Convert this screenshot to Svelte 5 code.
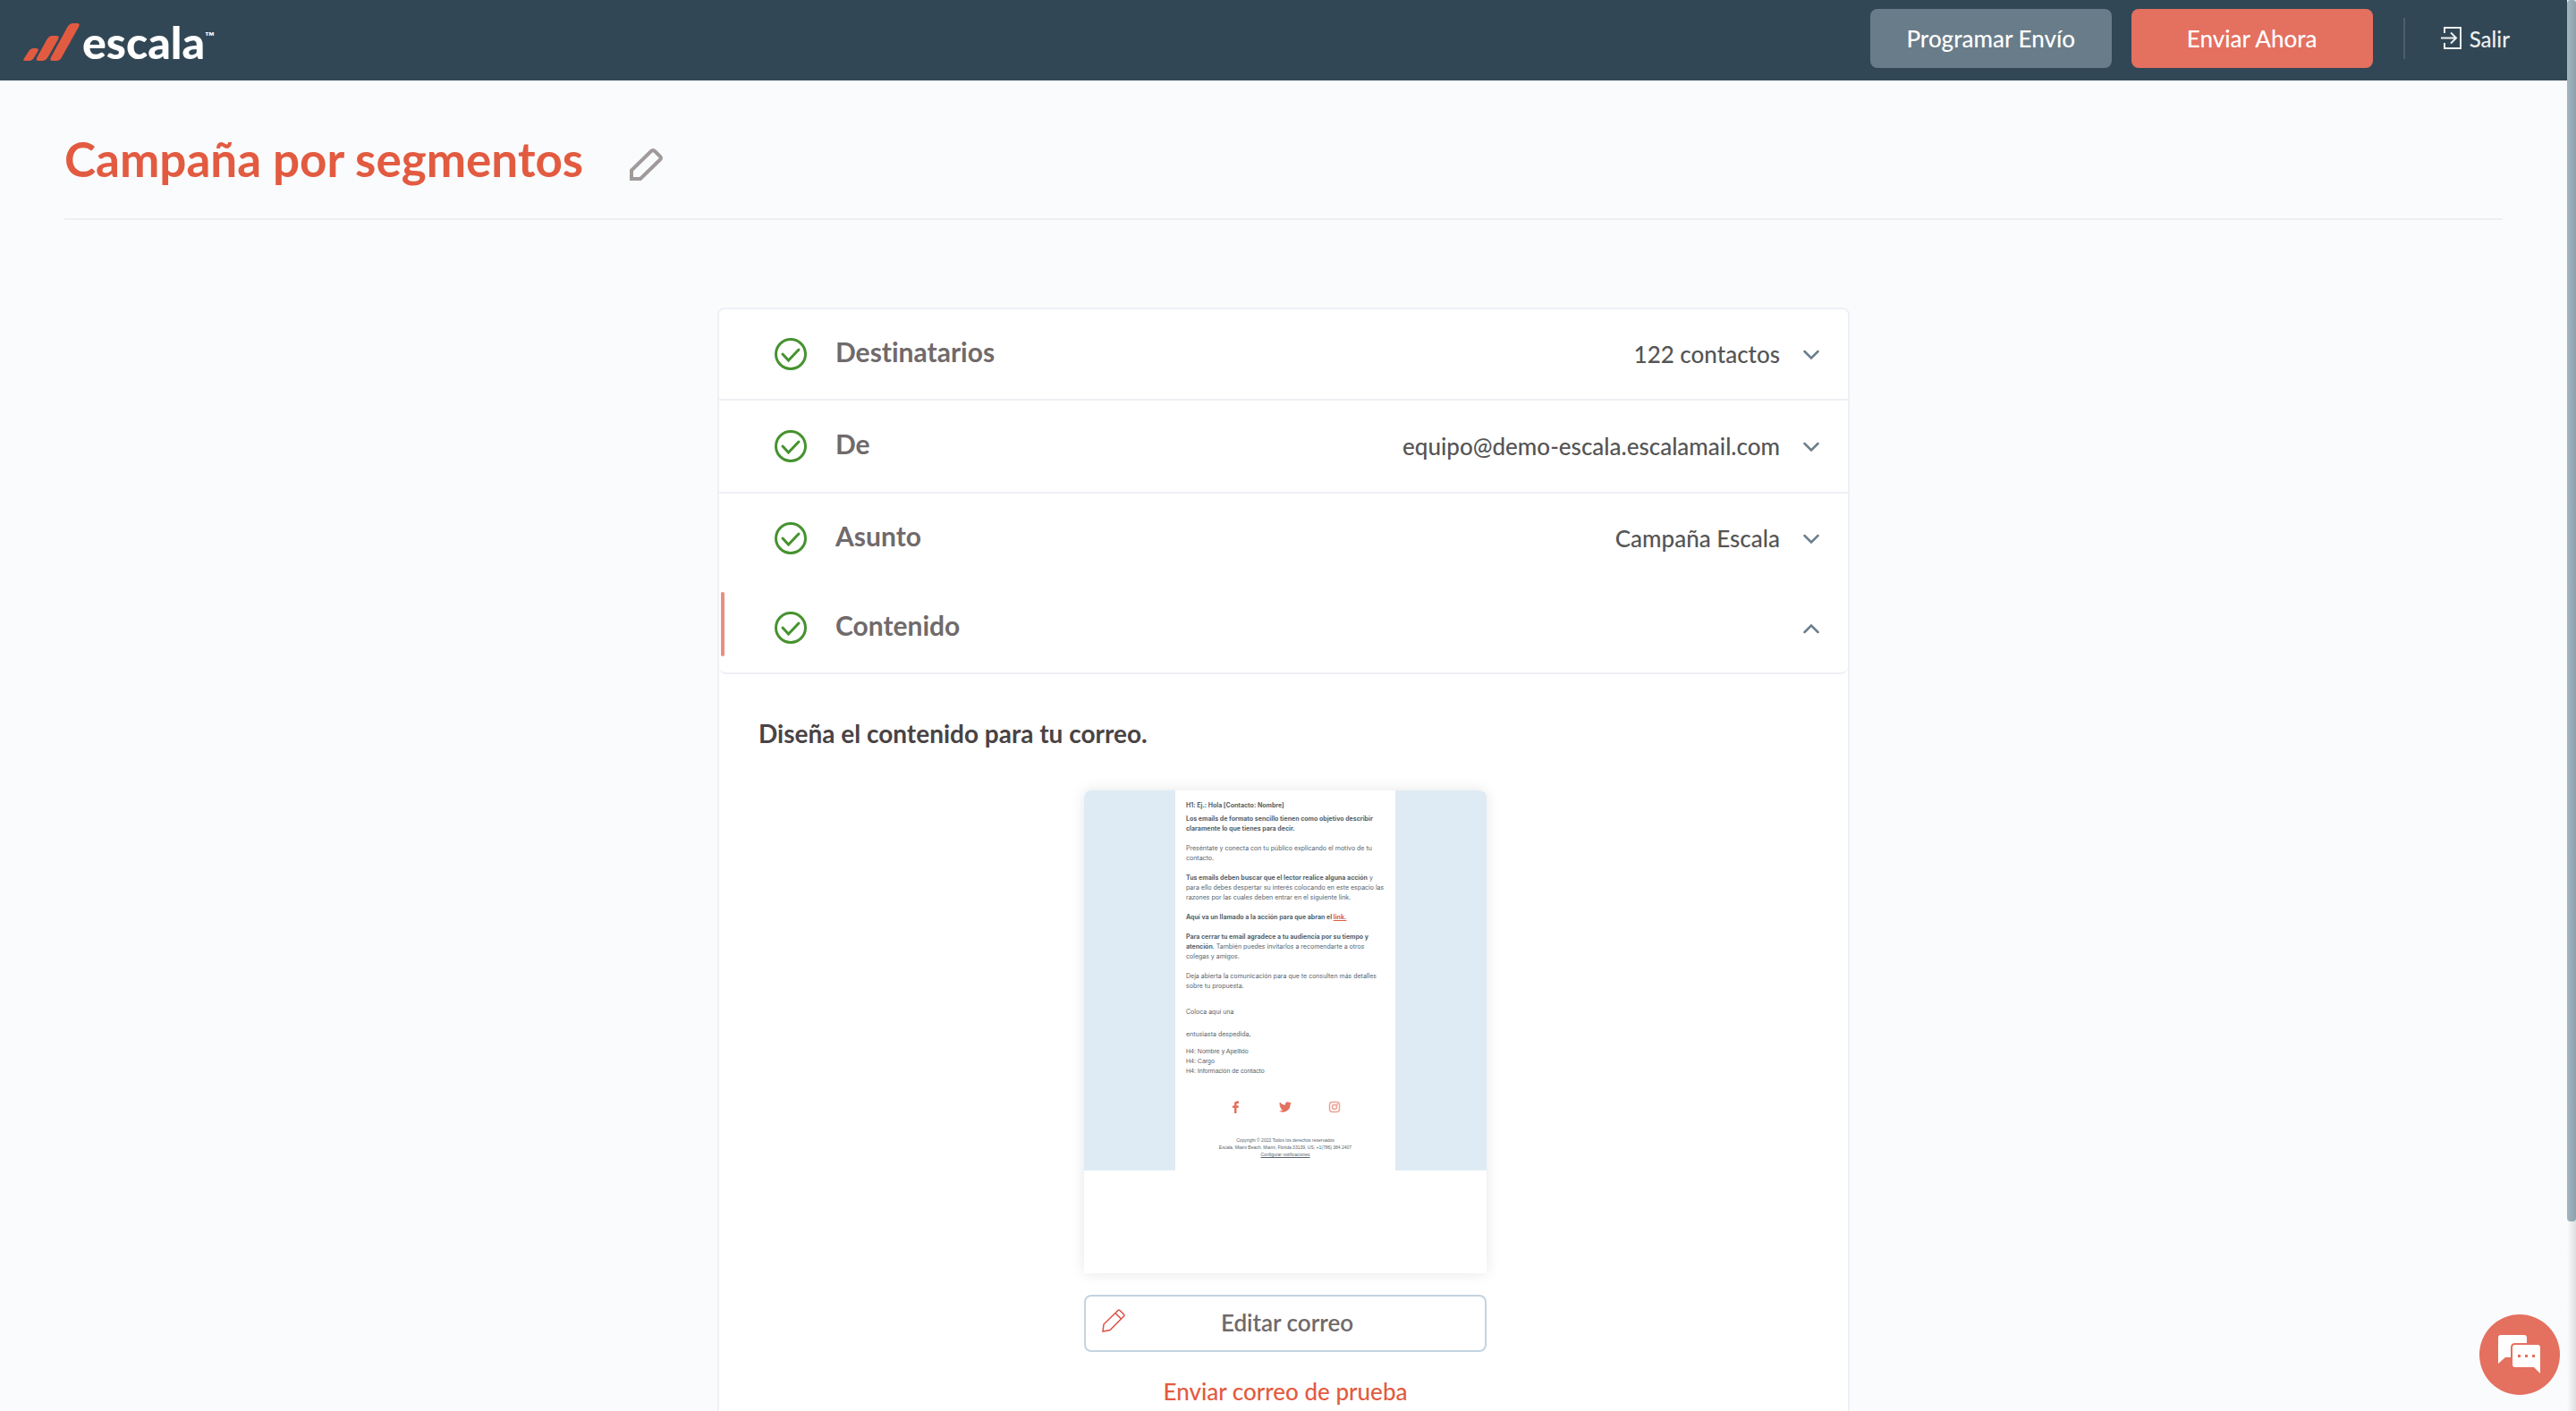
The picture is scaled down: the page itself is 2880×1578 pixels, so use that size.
<script lang="ts">
  type Step = { title: string; value: string; open?: boolean };

  let steps: Step[] = $state([
    { title: 'Destinatarios', value: '122 contactos' },
    { title: 'De', value: 'equipo@demo-escala.escalamail.com' },
    { title: 'Asunto', value: 'Campaña Escala' },
    { title: 'Contenido', value: '', open: true }
  ]);
</script>

<header class="topbar">
  <a class="logo" href="/" aria-label="escala">
    <svg width="64" height="44" viewBox="0 0 64 44" aria-hidden="true">
      <g fill="#e25b41">
        <path d="M6 31.500Q8 28 11.500 28H14.500Q18 28 16.200 31.500L12 38.500Q9.800 42 6.500 42H2Q-.8 42 .8 39.500Z" />
        <path d="M26.500 18Q28.800 14 32.500 14H37Q41 14 39 18L27.500 38Q25.200 42 21 42H17Q13.500 42 15.500 38Z" />
        <path d="M49.500 4Q52 0 56 0H60Q64 0 62 4L43 38Q40.800 42 37 42H32.500Q29 42 31 38Z" />
      </g>
    </svg>
    <span class="wordmark">escala</span><span class="tm">™</span>
  </a>
  <nav class="actions">
    <button class="btn schedule">Programar Envío</button>
    <button class="btn send">Enviar Ahora</button>
    <a class="exit" href="/salir">
      <svg width="24" height="26" viewBox="0 0 24 26" fill="none" stroke="currentColor" stroke-width="2" aria-hidden="true">
        <path d="M4 7V1H22V24H4V18M0 12.500H17M11 6.500L17 12.500L11 18.500" />
      </svg>
      Salir
    </a>
  </nav>
</header>

<main>
  <div class="heading">
    <h1>Campaña por segmentos</h1>
    <button class="rename" aria-label="Editar nombre">
      <svg width="38" height="38" viewBox="0 0 38 38" fill="none" stroke="#a09a9b" stroke-width="4" aria-hidden="true">
        <path d="M2 35V25.500L24 4Q26 2 28 4L34 10Q36 11.500 34 13.500L12 35Z" />
      </svg>
    </button>
  </div>

  <section class="panel">
    {#each steps as step}
      <button class="step" class:open={step.open} aria-expanded={!!step.open} onclick={() => (step.open = !step.open)}>
        <svg class="check" width="36" height="36" viewBox="0 0 36 36" fill="none" stroke="#46922f" stroke-width="3" aria-hidden="true">
          <circle cx="18" cy="18" r="16.500" />
          <path d="M9 18L15.500 25L27 13" stroke-linecap="round" />
        </svg>
        <span class="title">{step.title}</span>
        <span class="value">{step.value}</span>
        <svg class="chevron" width="18" height="12" viewBox="0 0 18 12" fill="none" stroke="#6b7f8c" stroke-width="2.500" aria-hidden="true">
          <path d="M1.500 2L9 9.500L16.500 2" stroke-linecap="round" />
        </svg>
      </button>
    {/each}

    <div class="content">
      <h2>Diseña el contenido para tu correo.</h2>
      <div class="editor">
        <article class="preview">
          <div class="backdrop">
            <div class="mail">
              <p class="hello"><b>H1: Ej.: Hola [Contacto: Nombre]</b></p>
              <p><b>Los emails de formato sencillo tienen como objetivo describir<br />claramente lo que tienes para decir.</b></p>
              <p>Preséntate y conecta con tu público explicando el motivo de tu<br />contacto.</p>
              <p><b>Tus emails deben buscar que el lector realice alguna acción</b> y<br />para ello debes despertar su interés colocando en este espacio las<br />razones por las cuales deben entrar en el siguiente link.</p>
              <p><b>Aquí va un llamado a la acción para que abran el <a href="/link">link.</a></b></p>
              <p><b>Para cerrar tu email agradece a tu audiencia por su tiempo y<br />atención</b>. También puedes invitarlos a recomendarte a otros<br />colegas y amigos.</p>
              <p>Deja abierta la comunicación para que te consulten más detalles<br />sobre tu propuesta.</p>
              <p class="bye">Coloca aquí una</p>
              <p class="bye">entusiasta despedida,</p>
              <p class="sign">H4: Nombre y Apellido<br />H4: Cargo<br />H4: Información de contacto</p>
              <div class="social">
                <svg width="14" height="14" viewBox="0 0 14 14" fill="#e4705f" aria-hidden="true">
                  <path d="M5 14V8H3V5.500H5V3.500Q5 .5 8 .5H10V3H8.500Q7.500 3 7.500 4V5.500H10L9.500 8H7.500V14Z" />
                </svg>
                <svg width="14" height="14" viewBox="0 0 24 24" fill="#e4705f" aria-hidden="true">
                  <path d="M24 4.600a10 10 0 0 1-2.800.8 5 5 0 0 0 2.100-2.700 10 10 0 0 1-3.100 1.200A4.900 4.900 0 0 0 11.800 8.400 14 14 0 0 1 1.700 3.200a4.900 4.900 0 0 0 1.500 6.600 5 5 0 0 1-2.200-.6c0 2.300 1.600 4.400 3.900 4.900a5 5 0 0 1-2.200.1 4.900 4.900 0 0 0 4.600 3.400A9.900 9.900 0 0 1 0 19.500a14 14 0 0 0 21.500-12.400A10 10 0 0 0 24 4.600z" />
                </svg>
                <svg width="14" height="14" viewBox="0 0 14 14" fill="none" stroke="#f0a296" stroke-width="1.500" aria-hidden="true">
                  <rect x="1.500" y="1.500" width="11" height="11" rx="3" />
                  <circle cx="7" cy="7" r="2.500" />
                  <circle cx="10" cy="4" r=".3" />
                </svg>
              </div>
              <footer>
                Copyright © 2022 Todos los derechos reservados<br />Escala, Miami Beach, Miami, Florida 33139, US, +1(786) 384 2407<br />
                <a href="/notificaciones">Configurar notificaciones</a>
              </footer>
            </div>
          </div>
        </article>
        <button class="edit">
          <svg width="26" height="26" viewBox="0 0 26 26" fill="none" stroke="#e04f45" stroke-width="1.500" aria-hidden="true">
            <path d="M1 25L2 17L18 1.500Q19 .5 20 1.500L24.500 6Q25.500 7 24.500 8L9 23.500ZM15 4.500L21.500 11" />
          </svg>
          <span>Editar correo</span>
        </button>
        <button class="test">Enviar correo de prueba</button>
      </div>
    </div>
  </section>
</main>

<button class="chat" aria-label="Chat">
  <svg width="48" height="44" viewBox="0 0 48 44" aria-hidden="true">
    <path d="M3 0H29Q32 0 32 3V9H19Q14 9 14 14V25H8L0 32V3Q0 0 3 0Z" fill="#fff" />
    <path d="M19 11H44Q47 11 47 14V43L40 36H19Q16 36 16 33V14Q16 11 19 11Z" fill="#fff" />
    <path d="M22 22h3v3h-3zM30 22h3v3h-3zM38 22h3v3h-3z" fill="#e4705f" />
  </svg>
</button>
<div class="scrollbar" aria-hidden="true"><div class="thumb"></div></div>

<style>
  :global(html) {
    overflow: hidden;
  }
  :global(body) {
    background: #fafbfd;
    font-family: Lato, 'Open Sans', sans-serif;
    font-variant-ligatures: none;
    overflow: hidden;
  }
  button {
    padding: 0;
    border: none;
    background: none;
    font-family: inherit;
    font-variant-ligatures: none;
    cursor: pointer;
  }
  a {
    color: inherit;
    text-decoration: none;
  }
  .topbar {
    display: flex;
    align-items: flex-start;
    justify-content: space-between;
    box-sizing: border-box;
    height: 90px;
    padding: 10px 74px 0 26px;
    background: #324755;
    color: #fff;
  }
  .logo {
    display: flex;
    align-items: flex-start;
    padding-top: 16px;
  }
  .wordmark {
    margin-left: 2px;
    font-size: 50px;
    font-weight: 900;
    line-height: 42px;
  }
  .tm {
    font-size: 14px;
    font-weight: 700;
    line-height: 30px;
  }
  .actions {
    display: flex;
    align-items: center;
    gap: 22px;
  }
  .btn {
    width: 270px;
    height: 66px;
    border-radius: 8px;
    color: #fff;
    font-size: 26px;
    font-weight: 500;
  }
  .schedule {
    background: #697c89;
  }
  .send {
    background: #e4705f;
  }
  .exit {
    display: flex;
    align-items: center;
    gap: 8px;
    height: 46px;
    margin-left: 12px;
    padding-left: 40px;
    border-left: 2px solid #4c5e6b;
    color: #eceff1;
    font-size: 24px;
    font-weight: 500;
  }
  main {
    padding: 0 82px 0 72px;
  }
  .heading {
    display: flex;
    align-items: center;
    gap: 52px;
    box-sizing: border-box;
    height: 156px;
    padding-top: 22px;
    border-bottom: 2px solid #edeff2;
  }
  h1 {
    margin: 0;
    color: #e25b41;
    font-size: 53px;
    font-weight: 700;
    line-height: 60px;
  }
  .rename svg {
    display: block;
    margin-top: 12px;
  }
  .panel {
    box-sizing: border-box;
    max-width: 1266px;
    margin: 98px auto 0;
    border: 2px solid #eff0f5;
    border-radius: 8px;
    background: #fff;
  }
  .step {
    display: flex;
    align-items: center;
    position: relative;
    box-sizing: border-box;
    width: 100%;
    height: 102px;
    padding: 0 32px 0 62px;
    border-bottom: 2px solid #eff0f5;
    text-align: left;
  }
  .step:nth-child(2) {
    height: 104px;
  }
  .step:nth-child(3) {
    height: 100px;
    border-bottom: none;
  }
  .step.open {
    border-radius: 0 0 8px 8px;
  }
  .step.open::before {
    content: '';
    position: absolute;
    left: 2px;
    top: 10px;
    width: 4px;
    height: 72px;
    border-radius: 2px;
    background: #e78f82;
  }
  .title {
    margin-left: 32px;
    padding-bottom: 6px;
    color: #706a6b;
    font-size: 30px;
    font-weight: 700;
  }
  .value {
    margin-left: auto;
    color: #555;
    font-size: 26px;
    font-weight: 500;
  }
  .chevron {
    margin: 2px 0 0 26px;
  }
  .open .chevron {
    transform: rotate(180deg);
  }
  .content {
    padding: 48px 40px 40px 44px;
  }
  h2 {
    margin: 0;
    color: #494345;
    font-size: 28px;
    font-weight: 700;
    line-height: 36px;
  }
  .editor {
    display: flex;
    flex-direction: column;
    width: 450px;
    margin: 46px auto 0;
  }
  .preview {
    height: 540px;
    border-radius: 8px 8px 0 0;
    box-shadow: 0 0 16px rgba(0, 0, 0, 0.1);
    overflow: hidden;
  }
  .backdrop {
    padding: 0 102px;
    background: #deebf5;
  }
  .mail {
    box-sizing: border-box;
    height: 425px;
    padding: 11px 12px;
    background: #fff;
    color: #56636c;
    font-family: Inter, 'Liberation Sans', sans-serif;
    font-size: 7px;
    line-height: 11px;
    white-space: nowrap;
  }
  .mail p {
    margin: 0 0 11px;
  }
  .mail .hello {
    margin-bottom: 4px;
  }
  .mail p a {
    color: #e25b41;
    text-decoration: underline;
  }
  .mail .bye {
    margin: 18px 0 14px;
  }
  .mail .bye + .bye {
    margin: 0 0 8px;
  }
  .mail .sign,
  footer {
    font-family: 'Liberation Sans', Arial, sans-serif;
  }
  .social {
    display: flex;
    justify-content: center;
    gap: 41px;
    margin-top: 28px;
  }
  footer {
    margin-top: 26px;
    font-size: 5px;
    line-height: 8px;
    text-align: center;
  }
  footer a {
    text-decoration: underline;
  }
  .edit {
    display: flex;
    align-items: center;
    height: 64px;
    margin-top: 24px;
    padding: 0 40px 2px 18px;
    border: 2px solid #c4d4e0;
    border-radius: 8px;
    color: #706a6b;
    font-size: 26px;
    font-weight: 600;
  }
  .edit svg {
    margin-bottom: 4px;
  }
  .edit span {
    flex: 1;
  }
  .test {
    margin-top: 24px;
    color: #e25b41;
    font-size: 26px;
    font-weight: 500;
    line-height: 40px;
  }
  .chat {
    display: grid;
    place-items: center;
    position: fixed;
    right: 18px;
    bottom: 18px;
    width: 90px;
    height: 90px;
    border-radius: 50%;
    background: #e4705f;
  }
  .scrollbar {
    position: fixed;
    top: 0;
    right: 0;
    bottom: 0;
    width: 10px;
    background: linear-gradient(to right, #fafbfd, #dddfe0);
  }
  .thumb {
    height: 1366px;
    border-radius: 4px;
    background: linear-gradient(to right, #a2b6c1, #8ea0ab);
  }
</style>
